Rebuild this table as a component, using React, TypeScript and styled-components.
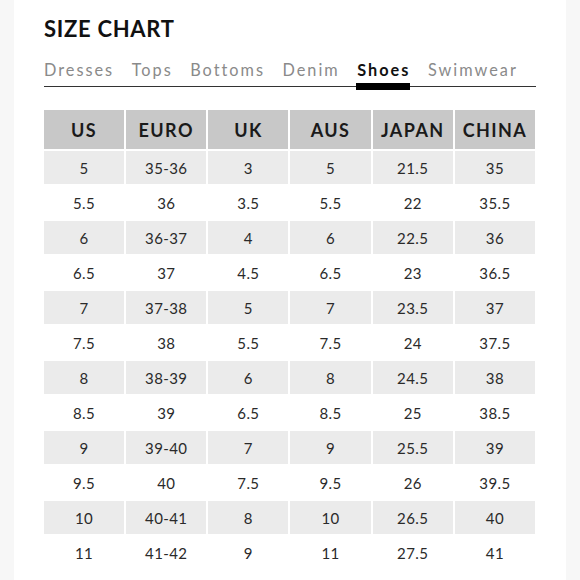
import React from 'react';
import styled, { createGlobalStyle } from 'styled-components';

const GlobalStyle = createGlobalStyle`
  html, body {
    margin: 0;
    padding: 0;
    background: #f7f7f7;
  }
  body {
    font-family: 'Lato', 'Liberation Sans', sans-serif;
  }
`;

const Card = styled.div`
  margin: 0 14px;
  min-height: 580px;
  background: #ffffff;
  padding: 16px 30px 0;
  box-sizing: border-box;
`;

const Title = styled.h1`
  margin: 0;
  font-size: 22px;
  line-height: 26px;
  font-weight: 700;
  letter-spacing: 0.7px;
  color: #111;
`;

const Tabs = styled.nav`
  display: flex;
  gap: 17.5px;
  margin-top: 18px;
  border-bottom: 1.5px solid #333;
  width: 492px;
`;

const Tab = styled.span<{ $active?: boolean }>`
  position: relative;
  font-size: 16.3px;
  line-height: 20px;
  padding-bottom: 6px;
  letter-spacing: 2px;
  font-weight: ${p => (p.$active ? 700 : 400)};
  color: ${p => (p.$active ? '#111' : '#8a8a8a')};

  &::after {
    content: '';
    display: ${p => (p.$active ? 'block' : 'none')};
    position: absolute;
    left: -1px;
    right: 0;
    bottom: -4px;
    height: 7px;
    background: #000;
  }
`;

const Table = styled.div`
  display: grid;
  grid-template-columns: repeat(6, 1fr);
  gap: 2px;
  width: 491px;
  margin-top: 23px;
`;

const HeadCell = styled.div`
  height: 39px;
  display: flex;
  align-items: center;
  justify-content: center;
  background: #c8c8c8;
  font-size: 18px;
  font-weight: 700;
  letter-spacing: 1.4px;
  color: #1a1a1a;
`;

const Cell = styled.div<{ $shaded: boolean }>`
  height: 33px;
  display: flex;
  align-items: center;
  justify-content: center;
  background: ${p => (p.$shaded ? '#ebebeb' : '#ffffff')};
  font-size: 15px;
  letter-spacing: 0.4px;
  color: #2a2a2a;
`;

const tabs = ['Dresses', 'Tops', 'Bottoms', 'Denim', 'Shoes', 'Swimwear'];
const headers = ['US', 'EURO', 'UK', 'AUS', 'JAPAN', 'CHINA'];

const rows = [
  ['5', '35-36', '3', '5', '21.5', '35'],
  ['5.5', '36', '3.5', '5.5', '22', '35.5'],
  ['6', '36-37', '4', '6', '22.5', '36'],
  ['6.5', '37', '4.5', '6.5', '23', '36.5'],
  ['7', '37-38', '5', '7', '23.5', '37'],
  ['7.5', '38', '5.5', '7.5', '24', '37.5'],
  ['8', '38-39', '6', '8', '24.5', '38'],
  ['8.5', '39', '6.5', '8.5', '25', '38.5'],
  ['9', '39-40', '7', '9', '25.5', '39'],
  ['9.5', '40', '7.5', '9.5', '26', '39.5'],
  ['10', '40-41', '8', '10', '26.5', '40'],
  ['11', '41-42', '9', '11', '27.5', '41'],
];

export default function App() {
  return (
    <>
      <GlobalStyle />
      <Card>
        <Title>SIZE CHART</Title>
        <Tabs>
          {tabs.map(t => (
            <Tab key={t} $active={t === 'Shoes'}>{t}</Tab>
          ))}
        </Tabs>
        <Table>
          {headers.map(h => (
            <HeadCell key={h}>{h}</HeadCell>
          ))}
          {rows.map((row, i) =>
            row.map((v, j) => (
              <Cell key={`${i}-${j}`} $shaded={i % 2 === 0}>{v}</Cell>
            ))
          )}
        </Table>
      </Card>
    </>
  );
}
